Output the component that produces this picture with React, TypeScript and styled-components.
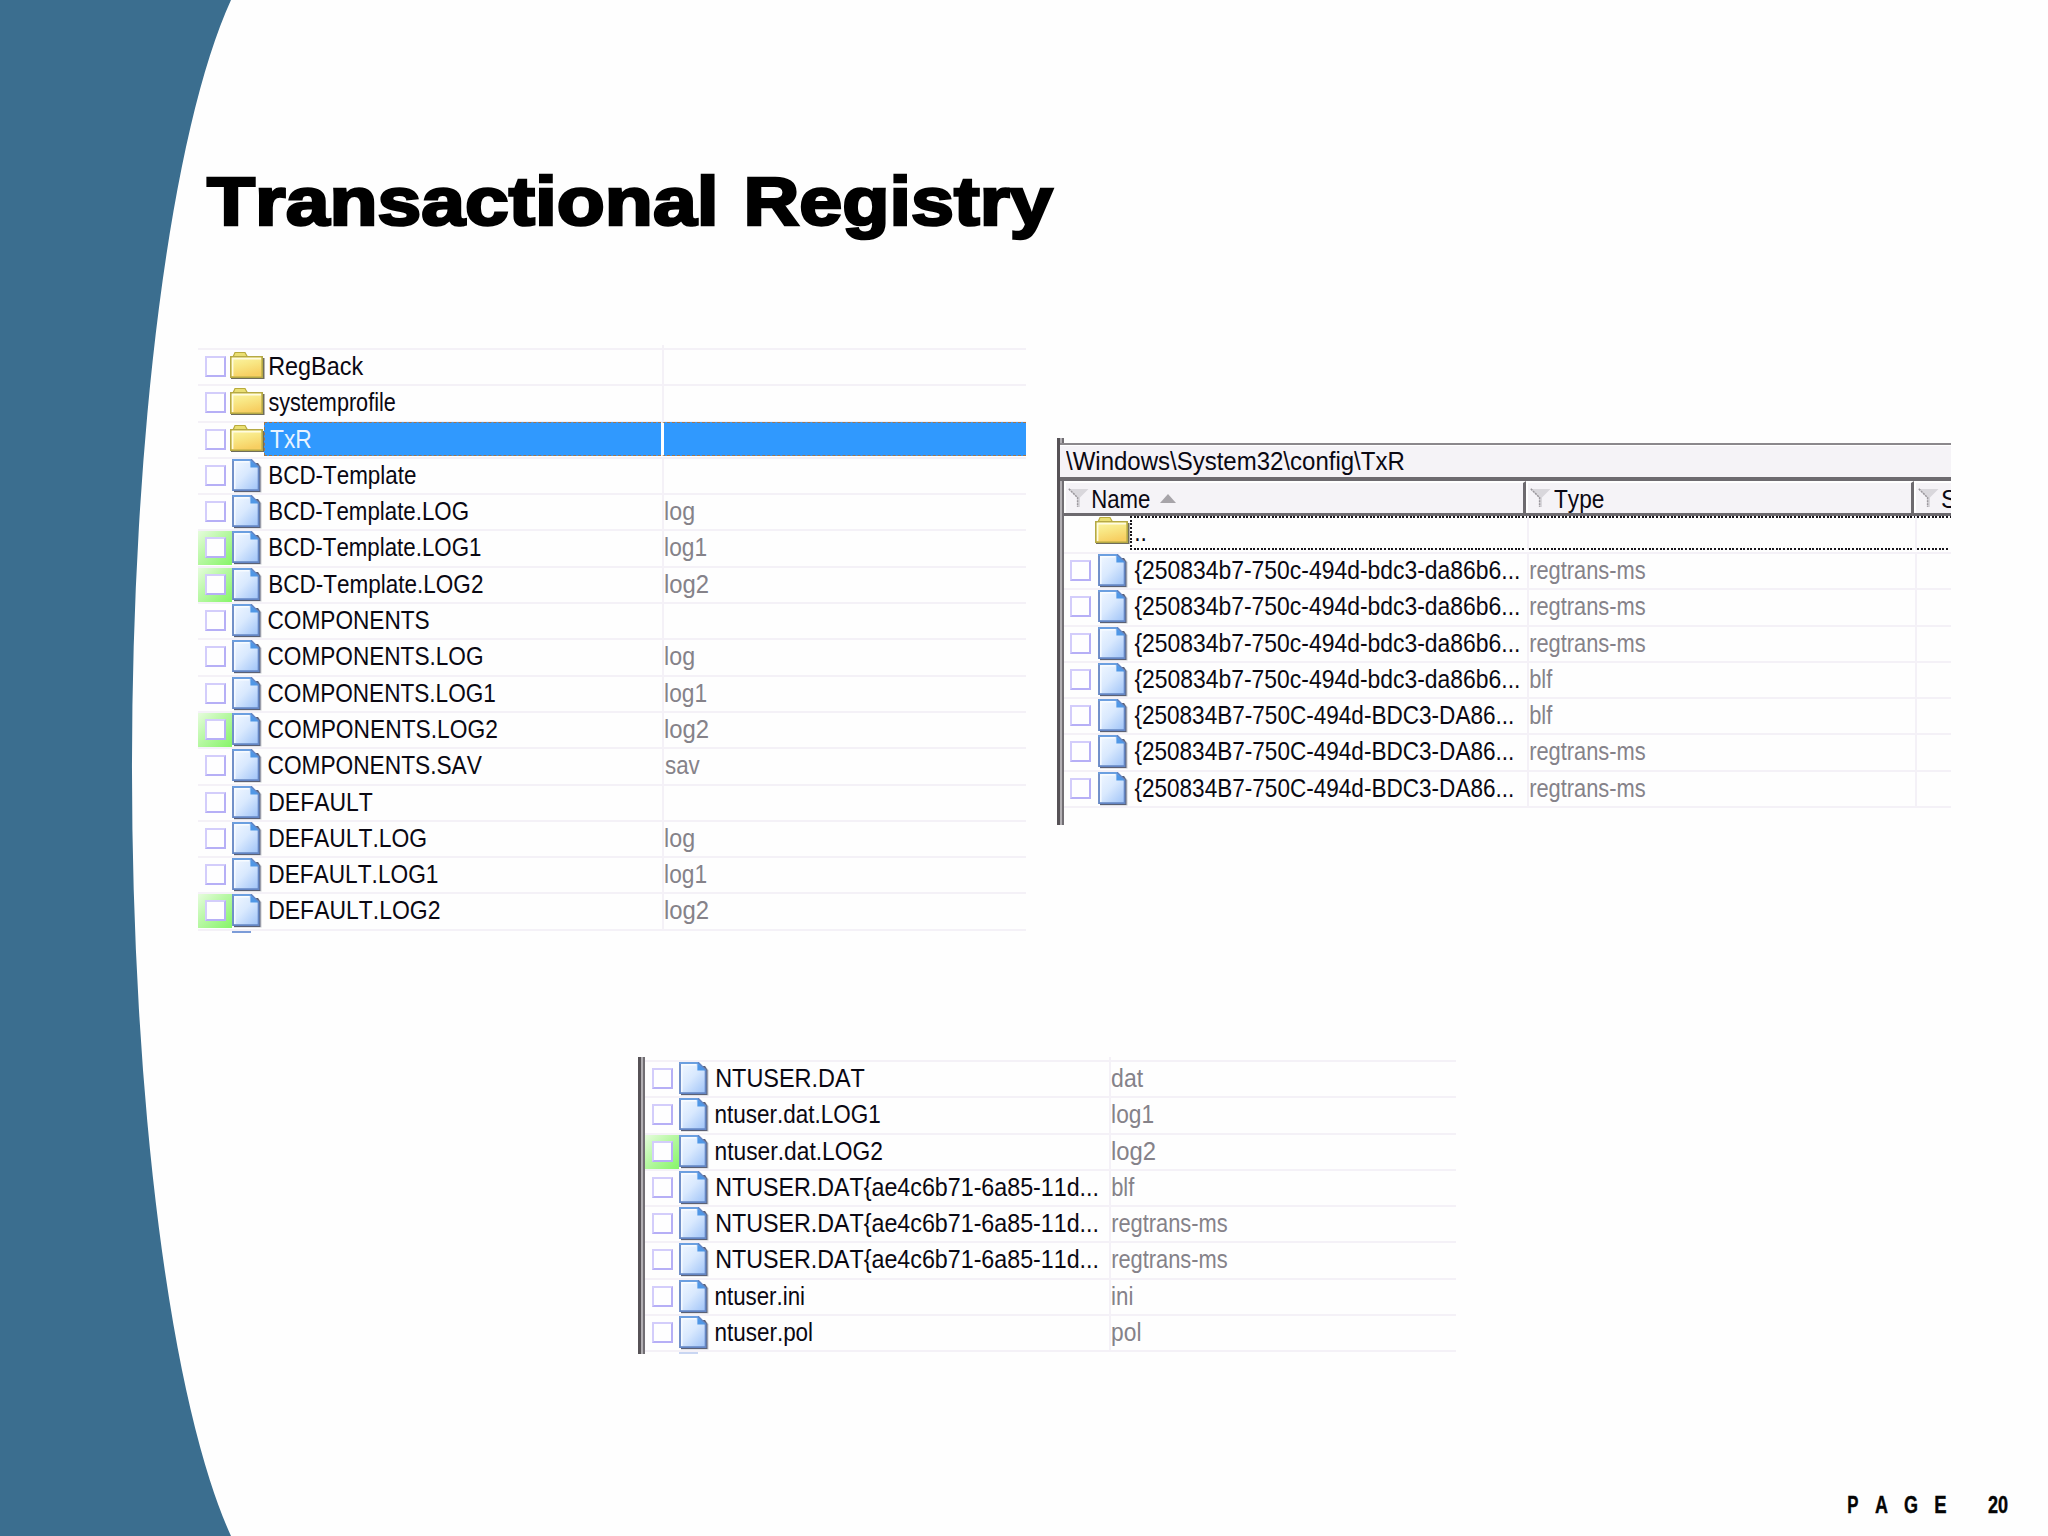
import React from "react";
import styled, { createGlobalStyle, css } from "styled-components";

const GlobalStyle = createGlobalStyle`
  body {
    margin: 0;
    background: #fefefe;
  }
  * {
    box-sizing: border-box;
  }
`;

const SANS = '"Liberation Sans", Arial, sans-serif';
const ROW_HEIGHT = 36.3;

/* ---------- text fitted to an exact ink width ---------- */

const FitSpan = styled.span<{ $weight: number; $size: number; $stroke?: number }>`
  display: block;
  width: max-content;
  white-space: pre;
  font-family: ${SANS};
  font-size: ${(p) => p.$size}px;
  font-weight: ${(p) => p.$weight};
  font-kerning: none;
  transform-origin: 0 50%;
  ${(p) => p.$stroke && css`-webkit-text-stroke: ${p.$stroke}px currentColor;`}
`;

let measuring: CanvasRenderingContext2D | null = null;

function Fit(props: {
  text: string;
  width: number;
  size?: number;
  weight?: number;
  stroke?: number;
  nudge?: number;
}) {
  const { text, width, size = 26, weight = 400, stroke, nudge = 0 } = props;
  if (!measuring) measuring = document.createElement("canvas").getContext("2d");
  let scale = 1;
  let shift = 0;
  if (measuring) {
    measuring.font = `${weight} ${size}px ${SANS}`;
    measuring.fontKerning = "none";
    const m = measuring.measureText(text);
    scale = width / (m.actualBoundingBoxRight + m.actualBoundingBoxLeft);
    shift = m.actualBoundingBoxLeft * scale;
  }
  return (
    <FitSpan
      $weight={weight}
      $size={size}
      $stroke={stroke}
      style={{ transform: `translateX(${shift + nudge}px) scaleX(${scale})` }}
    >
      {text}
    </FitSpan>
  );
}

/* ---------- icons ---------- */

const IconSvg = styled.svg`
  display: block;
  flex: none;
  overflow: visible;
`;

function FolderIcon() {
  return (
    <IconSvg width="35" height="29" viewBox="0 0 35 29">
      <defs>
        <linearGradient id="folderFace" x1="0" y1="0" x2="0.35" y2="1">
          <stop offset="0" stopColor="#fbf6a6" />
          <stop offset="0.5" stopColor="#f8e683" />
          <stop offset="1" stopColor="#f7cf62" />
        </linearGradient>
      </defs>
      <path d="M1 7V28H34.5V7Z" fill="#55523f" opacity="0.85" />
      <path d="M3 6L5 1.5H15L17.5 6Z" fill="#eadf72" stroke="#b9ab3e" strokeWidth="1.2" />
      <path d="M0.8 5.8H32.2V26.2H0.8Z" fill="url(#folderFace)" stroke="#b5a945" strokeWidth="1.6" />
      <path d="M2.6 25V7.6H31" fill="none" stroke="#fffce0" strokeWidth="1.6" />
    </IconSvg>
  );
}

function FileIcon() {
  return (
    <IconSvg width="30" height="34" viewBox="0 0 30 34">
      <defs>
        <linearGradient id="fileFace" x1="0" y1="0" x2="0.9" y2="1">
          <stop offset="0" stopColor="#f2f8ff" />
          <stop offset="0.5" stopColor="#d9e9fe" />
          <stop offset="1" stopColor="#a3c6f8" />
        </linearGradient>
      </defs>
      <path d="M2 4H26L29.5 8V33.6H2Z" fill="#4a4f62" opacity="0.3" />
      <path d="M2 4H26L28.4 8V33H2Z" fill="#3f465e" opacity="0.8" />
      <path d="M1 1H19.5L26.6 8V31.2H1Z" fill="url(#fileFace)" stroke="#6486c4" strokeWidth="1.8" />
      <path d="M0.4 1H19" stroke="#6b9fe0" strokeWidth="2" />
      <path d="M2.8 30V2.8H17" fill="none" stroke="#f7fbff" strokeWidth="1.4" />
      <path d="M18.4 1L26.8 8.4H18.4Z" fill="#4f97e6" />
    </IconSvg>
  );
}

function FunnelIcon() {
  return (
    <IconSvg width="21" height="20" viewBox="0 0 21 20">
      <path d="M1 1H20.5L12 9.5V19H9V9.5Z" fill="#d9d7dc" />
      <path d="M0.8 0.8L9.6 9.6V19" fill="none" stroke="#9a979c" strokeWidth="1.5" strokeDasharray="2.2 0.8" />
    </IconSvg>
  );
}

function SortArrow() {
  return (
    <IconSvg width="16" height="9" viewBox="0 0 16 9">
      <path d="M8 0L16 9H0Z" fill="#a7a4a9" />
    </IconSvg>
  );
}

/* ---------- file list ---------- */

const Row = styled.div<{ $nameWidth: number }>`
  display: grid;
  grid-template-columns: 34px 37px ${(p) => p.$nameWidth}px 1fr;
  height: ${ROW_HEIGHT}px;
  border-top: 2px solid #f4f1f7;
`;

const CheckCell = styled.div<{ $green?: boolean; $inset: number }>`
  padding: 6px 0 0 ${(p) => p.$inset}px;
  ${(p) =>
    p.$green &&
    css`
      height: 34px;
      background: linear-gradient(135deg, #e6fcdd 0%, #b8f8a4 45%, #86f568 100%);
    `}
`;

const CheckBox = styled.div`
  width: 21px;
  height: 21px;
  border: 2px solid;
  border-color: #d3cdfb #b6aff6 #b6aff6 #d3cdfb;
  background: #fefeff;
`;

const IconCell = styled.div<{ $folder?: boolean }>`
  margin-left: ${(p) => (p.$folder ? -2 : 0)}px;
  padding-top: ${(p) => (p.$folder ? 1 : 0)}px;
`;

const selection = css`
  height: 34px;
  margin-top: -1px;
  background: #3099fe;
  border-top: 1px dashed #a5764a;
  border-bottom: 1px dashed #a5764a;
`;

const NameCell = styled.div<{ $selected?: boolean }>`
  height: 34px;
  line-height: 32px;
  color: ${(p) => (p.$selected ? "#e8f4ff" : "#0a0812")};
  ${(p) =>
    p.$selected &&
    css`
      ${selection}
      margin-right: 1px;
      margin-left: -5px;
      padding-left: 4px;
      border-left: 1px dashed #a5764a;
    `}
`;

const TypeCell = styled.div<{ $selected?: boolean }>`
  height: 35px;
  padding-left: 1px;
  line-height: 32px;
  color: #858289;
  border-left: 2px solid #f4f1f7;
  ${(p) =>
    p.$selected &&
    css`
      ${selection}
      border-left-color: #fff;
    `}
`;

const Pane = styled.section<{ $width: number }>`
  display: flex;
  width: ${(p) => p.$width}px;
  flex: none;
  align-items: stretch;
`;

const PaneBar = styled.div`
  width: 7px;
  flex: none;
  background: linear-gradient(90deg, #565256 0 3px, #b3b0b4 3px 5px, #716e73 5px 7px);
`;

const PaneBody = styled.div<{ $bottom?: number }>`
  flex: 1;
  min-width: 0;
  padding-bottom: ${(p) => p.$bottom ?? 0}px;
`;

const ColumnStub = styled.div<{ $height: number }>`
  height: ${(p) => p.$height}px;
  margin-left: 464px;
  border-left: 2px solid #f4f1f7;
`;

const ListEnd = styled.div`
  height: 4px;
  border-top: 2px solid #f4f1f7;
  padding-left: 34px;
`;

const NextIconEdge = styled.div<{ $pale?: boolean }>`
  width: 19px;
  height: 2px;
  background: ${(p) => (p.$pale ? "#c9d6f2" : "#7c9cd8")};
`;

type Entry = {
  name: string;
  w: number;
  type?: string;
  folder?: boolean;
  green?: boolean;
  selected?: boolean;
};

const TYPE_WIDTH: Record<string, number> = {
  log: 29,
  log1: 41,
  log2: 43,
  sav: 35,
  dat: 31,
  blf: 23,
  "regtrans-ms": 115,
  ini: 20,
  pol: 28,
};

const bearing = (name: string) => (/^[ABD-Z]/.test(name) ? 1 : -0.6);

function FileRow({ entry, inset = 7, nameWidth = 393 }: { entry: Entry; inset?: number; nameWidth?: number }) {
  return (
    <Row $nameWidth={nameWidth}>
      <CheckCell $green={entry.green} $inset={inset}>
        <CheckBox />
      </CheckCell>
      <IconCell $folder={entry.folder}>{entry.folder ? <FolderIcon /> : <FileIcon />}</IconCell>
      <NameCell $selected={entry.selected}>
        <Fit text={entry.name} width={entry.w} nudge={bearing(entry.name)} />
      </NameCell>
      <TypeCell $selected={entry.selected}>
        {entry.type && <Fit text={entry.type} width={TYPE_WIDTH[entry.type]} size={25.5} />}
      </TypeCell>
    </Row>
  );
}

const configFiles: Entry[] = [
  { name: "RegBack", w: 94, folder: true },
  { name: "systemprofile", w: 127, folder: true },
  { name: "TxR", w: 41, folder: true, selected: true },
  { name: "BCD-Template", w: 146 },
  { name: "BCD-Template.LOG", w: 198, type: "log" },
  { name: "BCD-Template.LOG1", w: 211, type: "log1", green: true },
  { name: "BCD-Template.LOG2", w: 213, type: "log2", green: true },
  { name: "COMPONENTS", w: 161 },
  { name: "COMPONENTS.LOG", w: 214, type: "log" },
  { name: "COMPONENTS.LOG1", w: 227, type: "log1" },
  { name: "COMPONENTS.LOG2", w: 229, type: "log2", green: true },
  { name: "COMPONENTS.SAV", w: 214, type: "sav" },
  { name: "DEFAULT", w: 103 },
  { name: "DEFAULT.LOG", w: 156, type: "log" },
  { name: "DEFAULT.LOG1", w: 168, type: "log1" },
  { name: "DEFAULT.LOG2", w: 170, type: "log2", green: true },
];

const LOWER = "{250834b7-750c-494d-bdc3-da86b6...";
const UPPER = "{250834B7-750C-494d-BDC3-DA86...";

const txrFiles: Entry[] = [
  { name: LOWER, w: 384, type: "regtrans-ms" },
  { name: LOWER, w: 384, type: "regtrans-ms" },
  { name: LOWER, w: 384, type: "regtrans-ms" },
  { name: LOWER, w: 384, type: "blf" },
  { name: UPPER, w: 378, type: "blf" },
  { name: UPPER, w: 378, type: "regtrans-ms" },
  { name: UPPER, w: 378, type: "regtrans-ms" },
];

const userFiles: Entry[] = [
  { name: "NTUSER.DAT", w: 148, type: "dat" },
  { name: "ntuser.dat.LOG1", w: 165, type: "log1" },
  { name: "ntuser.dat.LOG2", w: 167, type: "log2", green: true },
  { name: "NTUSER.DAT{ae4c6b71-6a85-11d...", w: 380, type: "blf" },
  { name: "NTUSER.DAT{ae4c6b71-6a85-11d...", w: 380, type: "regtrans-ms" },
  { name: "NTUSER.DAT{ae4c6b71-6a85-11d...", w: 380, type: "regtrans-ms" },
  { name: "ntuser.ini", w: 89, type: "ini" },
  { name: "ntuser.pol", w: 97, type: "pol" },
];

/* ---------- TxR window ---------- */

const PathBar = styled.div`
  height: 38px;
  margin: 5px 0 0 -4px;
  padding-left: 6px;
  line-height: 33px;
  color: #0a0812;
  background: #f5f3f7;
  border-top: 2px solid #8b888c;
  border-bottom: 4px solid #6d6a6f;
  box-shadow: inset 0 1px 0 #fff;
`;

const HeaderRow = styled.div`
  display: grid;
  grid-template-columns: 462px 388px 1fr;
  height: 35px;
  overflow: hidden;
  background: #f5f3f7;
  border-bottom: 3px solid #6d6a6f;
`;

const HeaderCell = styled.div<{ $open?: boolean }>`
  display: flex;
  align-items: center;
  gap: 3px;
  min-width: 0;
  overflow: hidden;
  padding-left: 2px;
  border-left: 2px solid #fff;
  border-top: 2px solid #fff;
  border-right: ${(p) => (p.$open ? "0" : "3px solid #6d6a6f")};
  color: #0a0812;
  line-height: 32px;
`;

const SortSlot = styled.div`
  margin-left: 5px;
`;

const HeaderLabel = styled.div<{ $width: number }>`
  width: ${(p) => p.$width}px;
  flex: none;
  padding-top: 2px;
`;

const ParentRow = styled.div`
  display: grid;
  grid-template-columns: 31px 35px 397px 388px 1fr;
  height: 36px;
`;

const dots = "repeating-linear-gradient(90deg, #18161c 0 2px, transparent 2px 3.63px)";
const dotsDown = "repeating-linear-gradient(180deg, #18161c 0 2px, transparent 2px 3.63px)";

const FocusCell = styled.div<{ $first?: boolean }>`
  height: 34px;
  line-height: 33px;
  padding-left: ${(p) => (p.$first ? 6 : 0)}px;
  border-left: ${(p) => (p.$first ? "0" : "2px solid #f4f1f7")};
  color: #0a0812;
  background-image: ${dots}, ${dots}${(p) => (p.$first ? `, ${dotsDown}` : "")};
  background-repeat: no-repeat;
  background-position: 0 0, 0 100%, 0 0;
  background-size: 100% 2px, calc(100% - 2px) 2px, 2px 100%;
`;

const TxrRows = styled.div`
  display: grid;
  grid-template-columns: 1fr;
  background: linear-gradient(#f4f1f7, #f4f1f7) 851px 0 / 2px 100% no-repeat;
`;

/* ---------- slide ---------- */

const Slide = styled.main`
  position: relative;
  display: flex;
  flex-direction: column;
  width: 2048px;
  height: 1536px;
  padding: 161px 40px 0 198px;
  overflow: hidden;
  background: #fefefe;
`;

const Swoosh = styled.svg`
  position: absolute;
  left: 0;
  top: 0;
`;

const Title = styled.h1`
  display: grid;
  grid-template-columns: 541px 1fr;
  margin: 0 0 0 9px;
  height: 80px;
  line-height: 80px;
  color: #000;
`;

const TopLists = styled.div`
  display: flex;
  align-items: flex-start;
  gap: 31px;
  margin-top: 104px;
  height: 712px;
`;

const TxrSlot = styled.div`
  margin-top: 93px;
`;

const UserSlot = styled.div`
  margin-left: 440px;
`;

const PageMark = styled.footer`
  display: flex;
  align-items: center;
  margin: auto 0 14px;
  align-self: flex-end;
  height: 34px;
  line-height: 34px;
  color: #050505;
`;

const PageLetter = styled.div<{ $w: number }>`
  width: ${(p) => p.$w}px;
`;

export default function App() {
  return (
    <>
      <GlobalStyle />
      <Slide>
        <Swoosh width="240" height="1536" viewBox="0 0 240 1536">
          <path d="M0 0H231A163 835 0 0 0 231 1536H0Z" fill="#3b6e8f" />
        </Swoosh>
        <Title>
          <Fit text="Transactional " width={507} size={68} weight={700} stroke={2.6} />
          <Fit text="Registry" width={305} size={68} weight={700} stroke={2.6} />
        </Title>
        <TopLists>
          <Pane $width={828}>
            <PaneBody>
              <ColumnStub $height={3} />
              {configFiles.map((f, i) => (
                <FileRow key={i} entry={f} />
              ))}
              <ListEnd>
                <NextIconEdge />
              </ListEnd>
            </PaneBody>
          </Pane>
          <TxrSlot>
            <Pane $width={894}>
              <PaneBar />
              <PaneBody $bottom={15}>
                <PathBar>
                  <Fit text="\Windows\System32\config\TxR" width={338} />
                </PathBar>
                <HeaderRow>
                  <HeaderCell>
                    <FunnelIcon />
                    <HeaderLabel $width={60}>
                      <Fit text="Name" width={57} nudge={1} />
                    </HeaderLabel>
                    <SortSlot>
                      <SortArrow />
                    </SortSlot>
                  </HeaderCell>
                  <HeaderCell>
                    <FunnelIcon />
                    <HeaderLabel $width={60}>
                      <Fit text="Type" width={50} />
                    </HeaderLabel>
                  </HeaderCell>
                  <HeaderCell $open>
                    <FunnelIcon />
                    <HeaderLabel $width={20}>
                      <Fit text="S" width={15} />
                    </HeaderLabel>
                  </HeaderCell>
                </HeaderRow>
                <ParentRow>
                  <div />
                  <IconCell>
                    <FolderIcon />
                  </IconCell>
                  <FocusCell $first>
                    <Fit text=".." width={9} />
                  </FocusCell>
                  <FocusCell />
                  <FocusCell />
                </ParentRow>
                <TxrRows>
                  {txrFiles.map((f, i) => (
                    <FileRow key={i} entry={f} inset={6} nameWidth={392} />
                  ))}
                </TxrRows>
                <ListEnd />
              </PaneBody>
            </Pane>
          </TxrSlot>
        </TopLists>
        <UserSlot>
          <Pane $width={818}>
            <PaneBar />
            <PaneBody>
              <ColumnStub $height={3} />
              {userFiles.map((f, i) => (
                <FileRow key={i} entry={f} />
              ))}
              <ListEnd>
                <NextIconEdge $pale />
              </ListEnd>
            </PaneBody>
          </Pane>
        </UserSlot>
        <PageMark>
          <PageLetter $w={27}>
            <Fit text="P" width={10} size={23.5} weight={700} stroke={0.4} />
          </PageLetter>
          <PageLetter $w={29.5}>
            <Fit text="A" width={13} size={23.5} weight={700} stroke={0.4} />
          </PageLetter>
          <PageLetter $w={30.5}>
            <Fit text="G" width={13} size={23.5} weight={700} stroke={0.4} />
          </PageLetter>
          <PageLetter $w={53}>
            <Fit text="E" width={11} size={23.5} weight={700} stroke={0.4} />
          </PageLetter>
          <PageLetter $w={20.5}>
            <Fit text="20" width={20} size={23.5} weight={700} stroke={0.4} />
          </PageLetter>
        </PageMark>
      </Slide>
    </>
  );
}
